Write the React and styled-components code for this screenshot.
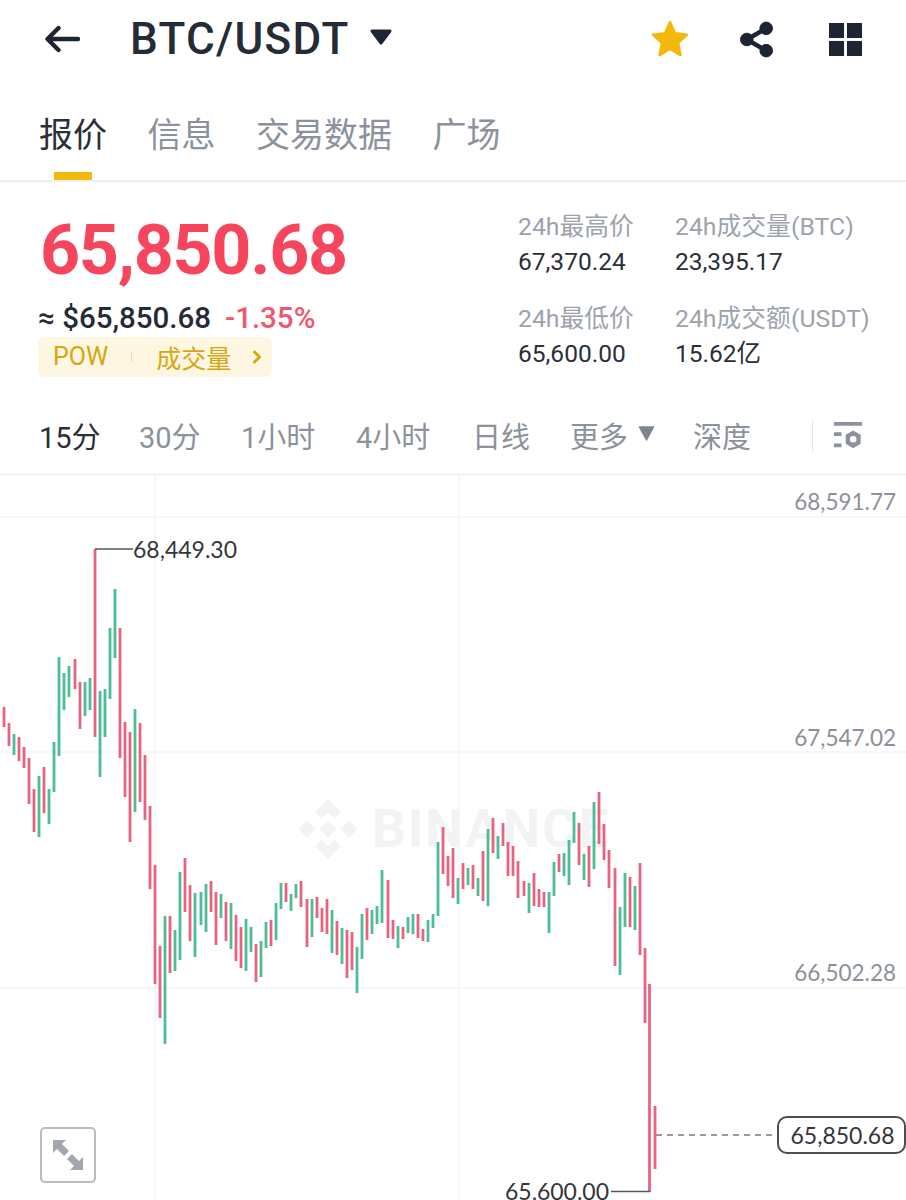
import React from 'react';
import styled, { createGlobalStyle } from 'styled-components';

const GlobalStyle = createGlobalStyle`
  html, body { margin: 0; padding: 0; background: #fff; }
  body { font-family: Roboto, "Noto Sans CJK SC", sans-serif; }
`;

const Page = styled.div`
  width: 906px;
  height: 1200px;
  overflow: hidden;
  display: flex;
  flex-direction: column;
  background: #fff;
  color: #1e2329;
`;

const Header = styled.header`
  height: 79px;
  display: flex;
  align-items: center;
  padding: 0 44px 0 45px;
`;

const Title = styled.h1`
  margin: 0 0 0 49px;
  font-size: 44px;
  font-weight: 500;
  letter-spacing: 1.300px;
  line-height: 1;
  color: #252b37;
`;

const HeaderActions = styled.div`
  margin-left: auto;
  display: flex;
  align-items: center;
`;

const StarSlot = styled.div`
  display: flex;
  margin-right: 51px;
`;

const ShareSlot = styled.div`
  display: flex;
  margin-right: 56px;
`;

const Tabs = styled.nav`
  height: 101px;
  display: flex;
  gap: 40.500px;
  padding: 0 39px;
  border-bottom: 2px solid #eeeeee;
`;

const Tab = styled.div`
  position: relative;
  padding-top: 35px;
  font-size: 34px;
  line-height: 42px;
  color: ${({ $active }) => ($active ? '#2a2f38' : '#8b929c')};

  ${({ $active }) => $active && `
    &::after {
      content: '';
      position: absolute;
      left: 15px;
      bottom: 0;
      width: 38px;
      height: 8px;
      background: #f0b90b;
    }
  `}
`;

const Summary = styled.section`
  height: 218px;
  display: flex;
  padding: 0 0 0 40px;
`;

const PriceColumn = styled.div`
  width: 478px;
  padding-top: 27px;
`;

const Price = styled.div`
  font-size: 70px;
  line-height: 82px;
  font-weight: 700;
  letter-spacing: -1.300px;
  color: #f6465d;
`;

const SubPrice = styled.div`
  margin-top: 11px;
  margin-left: -2px;
  display: flex;
  gap: 14px;
  font-size: 29.500px;
  line-height: 32px;
  font-weight: 500;
  color: #252b37;
`;

const Change = styled.span`
  color: #f0566c;
`;

const Badge = styled.div`
  margin-top: 3px;
  margin-left: -2px;
  width: 234px;
  height: 40px;
  box-sizing: border-box;
  display: flex;
  align-items: center;
  padding-left: 15px;
  border-radius: 6px;
  background: #fdf6e0;
  font-size: 25px;
  color: #d8a512;
`;

const BadgeDivider = styled.span`
  width: 1px;
  height: 10px;
  margin: 0 24px 0 23px;
  background: #e8dcb0;
`;

const StatsGrid = styled.div`
  padding-top: 30px;
  display: grid;
  grid-template-columns: 157px auto;
  grid-auto-rows: 92px;
`;

const Stat = styled.div`
  display: flex;
  flex-direction: column;
  gap: 5px;
`;

const StatLabel = styled.div`
  font-size: 24.800px;
  line-height: 30px;
  color: #9ca3ad;
  white-space: nowrap;
`;

const StatValue = styled.div`
  font-size: 24.500px;
  line-height: 30px;
  color: #2a2f38;
  white-space: nowrap;
`;

const Intervals = styled.div`
  height: 74px;
  display: flex;
  align-items: center;
  padding: 0 44px 0 39px;
  border-bottom: 3px solid #f5f5f5;
`;

const Interval = styled.div`
  width: ${({ $w }) => $w}px;
  flex: none;
  margin-top: 4px;
  font-size: 29px;
  line-height: 36px;
  color: ${({ $active }) => ($active ? '#2a2f38' : '#8b929c')};
  white-space: nowrap;
  display: flex;
  align-items: flex-start;
`;

const IntervalDivider = styled.div`
  width: 1px;
  height: 32px;
  margin-right: 21px;
  background: #e6e6e6;
`;

const Chart = styled.div`
  position: relative;
  flex: 1;
`;

const ChartSvg = styled.svg`
  position: relative;
  display: block;
  width: 906px;
  height: 724px;
`;

const Watermark = styled.div`
  position: absolute;
  left: 298px;
  top: 322px;
  display: flex;
  align-items: center;
  gap: 14px;
  font-size: 53px;
  font-weight: 700;
  letter-spacing: 2px;
  color: #f2f3f4;
  white-space: nowrap;
`;

const AxisLabel = styled.div`
  position: absolute;
  right: 10px;
  top: ${({ $top }) => $top}px;
  font-family: Lato, Roboto, sans-serif;
  font-size: 22.500px;
  line-height: 28px;
  color: #8c9098;
`;

const ExtremeLabel = styled.div`
  position: absolute;
  left: ${({ $left }) => $left}px;
  top: ${({ $top }) => $top}px;
  font-family: Lato, Roboto, sans-serif;
  font-size: 23px;
  line-height: 28px;
  color: #33363b;
`;

const LastPrice = styled.div`
  position: absolute;
  left: 777px;
  top: 640px;
  width: 129px;
  height: 38px;
  box-sizing: border-box;
  display: flex;
  align-items: center;
  justify-content: center;
  padding-left: 2px;
  border: 2px solid #4a4d52;
  border-radius: 10px;
  background: #fff;
  font-family: Lato, Roboto, sans-serif;
  font-size: 23px;
  color: #33363b;
`;

const ExpandButton = styled.div`
  position: absolute;
  left: 40px;
  top: 651px;
  width: 56px;
  height: 56px;
  box-sizing: border-box;
  display: flex;
  align-items: center;
  justify-content: center;
  border: 2px solid #b9bbbe;
  border-radius: 5px;
  background: #fff;
`;

const BackIcon = () => (
  <svg width="36" height="28" viewBox="0 0 36 28" fill="none" stroke="#1e2532" strokeWidth="4.400" strokeLinecap="round" strokeLinejoin="round">
    <path d="M33 14H3M13.500 3L2.500 14l11 11" />
  </svg>
);

const Caret = () => (
  <svg width="24" height="18" viewBox="0 0 24 18" style={{ marginLeft: 19, marginTop: -4 }}>
    <path d="M3 1.500h18a1.500 1.500 0 0 1 1.200 2.400l-9 12a1.500 1.500 0 0 1-2.400 0l-9-12A1.500 1.500 0 0 1 3 1.500z" fill="#1e2532" />
  </svg>
);

const StarIcon = () => (
  <svg width="38" height="38" viewBox="0 0 40 40">
    <path
      d="M20 2l5.400 11.900 12.600 1.500-9.300 8.800 2.400 12.800L20 30.600 8.900 37l2.400-12.800L2 15.400l12.600-1.500z"
      fill="#f4b70c"
      stroke="#f4b70c"
      strokeWidth="2.500"
      strokeLinejoin="round"
    />
  </svg>
);

const ShareIcon = () => (
  <svg width="33" height="37" viewBox="0 0 34 37" fill="#1e2532" stroke="#1e2532">
    <circle cx="27" cy="7" r="6.500" />
    <circle cx="7" cy="18.500" r="6.500" />
    <circle cx="27" cy="30" r="6.500" />
    <path d="M27 7L7 18.500 27 30" fill="none" strokeWidth="4.500" />
  </svg>
);

const GridIcon = () => (
  <svg width="33" height="33" viewBox="0 0 34 34" fill="#1e2532">
    <rect x="0" y="0" width="15.500" height="15.500" />
    <rect x="18.500" y="0" width="15.500" height="15.500" />
    <rect x="0" y="18.500" width="15.500" height="15.500" />
    <rect x="18.500" y="18.500" width="15.500" height="15.500" />
  </svg>
);

const BadgeChevron = () => (
  <svg width="10" height="14" viewBox="0 0 10 14" fill="none" stroke="#d8a512" strokeWidth="3" strokeLinecap="round" strokeLinejoin="round" style={{ marginLeft: 21 }}>
    <path d="M2.500 2l5 5-5 5" />
  </svg>
);

const MoreCaret = () => (
  <svg width="17" height="15" viewBox="0 0 17 15" style={{ marginLeft: 10, marginTop: 6 }}>
    <path d="M1.500 1h14L8.500 14z" fill="#7d8590" stroke="#7d8590" strokeWidth="1.500" strokeLinejoin="round" />
  </svg>
);

const IndicatorIcon = () => (
  <svg width="30" height="32" viewBox="0 0 30 32" fill="#8b929c">
    <rect x="0" y="1" width="30" height="4" />
    <rect x="0" y="12" width="8" height="4" />
    <rect x="0" y="24" width="8" height="4" />
    <path
      fillRule="evenodd"
      d="M20.500 10l8 4.600v9.800l-8 4.600-8-4.600v-9.800zM20.500 16a3.500 3.500 0 1 0 0 7 3.500 3.500 0 0 0 0-7z"
    />
  </svg>
);

const BinanceMark = () => (
  <svg width="60" height="60" viewBox="0 0 60 60" fill="#f2f3f4">
    <path d="M30 0l13 13-6.500 6.500L30 13l-6.500 6.500L17 13z" />
    <path d="M30 60L17 47l6.500-6.500L30 47l6.500-6.500L43 47z" />
    <path d="M9 21.500L17.500 30 9 38.500.500 30z" />
    <path d="M51 21.500l8.500 8.500-8.500 8.500-8.500-8.500z" />
    <path d="M30 21.500l8.500 8.500-8.500 8.500-8.500-8.500z" />
  </svg>
);

const ExpandIcon = () => (
  <svg width="32" height="32" viewBox="0 0 32 32" fill="#a3a8b0">
    <path d="M1 1h13l-4 4 7 7-5 5-7-7-4 4z" />
    <path d="M31 31H18l4-4-7-7 5-5 7 7 4-4z" />
  </svg>
);

// x, high, low, r = falling / g = rising. y values are page pixels read off the chart
const candles = [
  [4, 707, 727, 'r'], [9, 723, 746, 'r'], [14, 734, 755, 'g'], [19, 737, 761, 'r'], [24, 747, 768, 'r'],
  [29, 758, 804, 'r'], [34, 789, 832, 'r'], [39, 776, 837, 'g'], [44, 767, 813, 'r'], [49, 789, 824, 'g'],
  [54, 742, 792, 'g'], [59, 657, 756, 'g'], [64, 673, 710, 'g'], [69, 666, 697, 'g'], [75, 659, 689, 'r'],
  [80, 682, 729, 'r'], [85, 682, 716, 'g'], [90, 678, 710, 'g'], [95, 549, 737, 'r'], [100, 691, 777, 'g'],
  [105, 689, 737, 'g'], [110, 628, 699, 'g'], [115, 589, 658, 'g'], [120, 628, 758, 'r'], [125, 722, 797, 'r'],
  [130, 732, 842, 'r'], [135, 709, 812, 'g'], [140, 723, 802, 'r'], [145, 755, 820, 'r'], [150, 806, 889, 'r'],
  [155, 865, 984, 'r'], [160, 946, 1018, 'r'], [165, 916, 1044, 'g'], [170, 916, 973, 'r'], [175, 930, 971, 'g'],
  [180, 872, 960, 'g'], [185, 858, 912, 'r'], [190, 885, 941, 'r'], [195, 893, 957, 'g'], [201, 892, 925, 'g'],
  [206, 884, 932, 'g'], [211, 881, 912, 'r'], [216, 892, 945, 'r'], [221, 894, 918, 'g'], [226, 902, 941, 'r'],
  [231, 903, 949, 'g'], [236, 915, 961, 'r'], [241, 927, 968, 'r'], [246, 919, 971, 'g'], [251, 927, 952, 'g'],
  [256, 944, 982, 'r'], [261, 941, 977, 'g'], [266, 922, 948, 'g'], [271, 920, 946, 'r'], [276, 903, 940, 'g'],
  [281, 883, 909, 'g'], [286, 883, 902, 'r'], [291, 894, 911, 'g'], [296, 884, 898, 'g'], [301, 881, 907, 'r'],
  [307, 899, 947, 'r'], [312, 899, 937, 'g'], [317, 897, 918, 'r'], [322, 908, 932, 'r'], [327, 899, 934, 'r'],
  [332, 910, 953, 'g'], [337, 921, 955, 'r'], [342, 928, 964, 'g'], [347, 930, 978, 'r'], [352, 932, 970, 'r'],
  [357, 947, 993, 'g'], [362, 914, 959, 'g'], [367, 908, 940, 'r'], [372, 910, 934, 'g'], [377, 906, 924, 'g'],
  [382, 870, 923, 'g'], [388, 880, 938, 'r'], [393, 920, 939, 'r'], [398, 926, 948, 'g'], [403, 927, 939, 'r'],
  [408, 917, 933, 'g'], [413, 914, 934, 'g'], [418, 914, 938, 'r'], [423, 929, 941, 'r'], [428, 920, 942, 'g'],
  [433, 914, 928, 'g'], [438, 842, 916, 'g'], [443, 827, 874, 'r'], [448, 856, 886, 'r'], [453, 848, 898, 'r'],
  [458, 878, 904, 'g'], [463, 863, 889, 'r'], [468, 868, 885, 'g'], [473, 865, 889, 'r'], [478, 878, 896, 'g'],
  [483, 851, 901, 'r'], [488, 829, 906, 'g'], [493, 818, 853, 'r'], [498, 836, 859, 'g'], [503, 823, 846, 'r'],
  [508, 842, 876, 'r'], [513, 846, 876, 'r'], [518, 861, 898, 'r'], [524, 881, 896, 'r'], [529, 883, 913, 'g'],
  [534, 873, 906, 'r'], [539, 889, 907, 'r'], [544, 892, 907, 'r'], [549, 892, 933, 'g'], [554, 862, 896, 'g'],
  [559, 854, 872, 'r'], [564, 853, 876, 'g'], [569, 840, 885, 'g'], [574, 812, 843, 'g'], [579, 823, 865, 'r'],
  [584, 854, 880, 'g'], [589, 846, 887, 'r'], [594, 802, 869, 'g'], [599, 792, 844, 'r'], [604, 824, 860, 'r'],
  [609, 850, 888, 'r'], [615, 868, 966, 'r'], [620, 907, 975, 'g'], [625, 873, 927, 'g'], [630, 877, 927, 'r'],
  [635, 886, 930, 'g'], [640, 863, 955, 'r'], [645, 948, 1023, 'r'], [649.500, 984, 1192, 'r'], [655, 1106, 1169, 'r'],
];

const candleColor = { r: '#e9637f', g: '#4dbd95' };

const stats = [
  ['24h最高价', '67,370.24'],
  ['24h成交量(BTC)', '23,395.17'],
  ['24h最低价', '65,600.00'],
  ['24h成交额(USDT)', '15.62亿'],
];

const intervals = [
  ['15分', 100, true],
  ['30分', 102],
  ['1小时', 115],
  ['4小时', 116],
  ['日线', 98],
  ['更多', 123],
];

const App = () => (
  <Page>
    <GlobalStyle />
    <Header>
      <BackIcon />
      <Title>BTC/USDT</Title>
      <Caret />
      <HeaderActions>
        <StarSlot><StarIcon /></StarSlot>
        <ShareSlot><ShareIcon /></ShareSlot>
        <GridIcon />
      </HeaderActions>
    </Header>

    <Tabs>
      <Tab $active>报价</Tab>
      <Tab>信息</Tab>
      <Tab>交易数据</Tab>
      <Tab>广场</Tab>
    </Tabs>

    <Summary>
      <PriceColumn>
        <Price>65,850.68</Price>
        <SubPrice>
          <span>≈ $65,850.68</span>
          <Change>-1.35%</Change>
        </SubPrice>
        <Badge>
          POW
          <BadgeDivider />
          成交量
          <BadgeChevron />
        </Badge>
      </PriceColumn>
      <StatsGrid>
        {stats.map(([label, value]) => (
          <Stat key={label}>
            <StatLabel>{label}</StatLabel>
            <StatValue>{value}</StatValue>
          </Stat>
        ))}
      </StatsGrid>
    </Summary>

    <Intervals>
      {intervals.map(([label, w, active]) => (
        <Interval key={label} $w={w} $active={active}>
          {label}
          {label === '更多' && <MoreCaret />}
        </Interval>
      ))}
      <Interval $w={119}>深度</Interval>
      <IntervalDivider />
      <IndicatorIcon />
    </Intervals>

    <Chart>
      <Watermark>
        <BinanceMark />
        BINANCE
      </Watermark>
      <ChartSvg viewBox="0 476 906 724">
        <g stroke="#f5f5f5" strokeWidth="1.500">
          <path d="M0 517H906M0 752H906M0 988H906" />
          <path d="M155 476V1200M459 476V1200" />
        </g>
        {candles.map(([x, high, low, kind]) => (
          <line key={x} x1={x} x2={x} y1={high} y2={low} stroke={candleColor[kind]} strokeWidth="2.800" />
        ))}
        <path d="M95 549H133" stroke="#55585d" strokeWidth="1.600" fill="none" />
        <path d="M611 1191.500H650" stroke="#55585d" strokeWidth="1.600" fill="none" />
        <path d="M656 1135H775" stroke="#77797d" strokeWidth="1.500" strokeDasharray="6 5" fill="none" />
      </ChartSvg>

      <AxisLabel $top={12}>68,591.77</AxisLabel>
      <AxisLabel $top={248}>67,547.02</AxisLabel>
      <AxisLabel $top={483}>66,502.28</AxisLabel>
      <ExtremeLabel $left={133} $top={59}>68,449.30</ExtremeLabel>
      <ExtremeLabel $left={505} $top={701}>65,600.00</ExtremeLabel>
      <LastPrice>65,850.68</LastPrice>
      <ExpandButton>
        <ExpandIcon />
      </ExpandButton>
    </Chart>
  </Page>
);

export default App;
